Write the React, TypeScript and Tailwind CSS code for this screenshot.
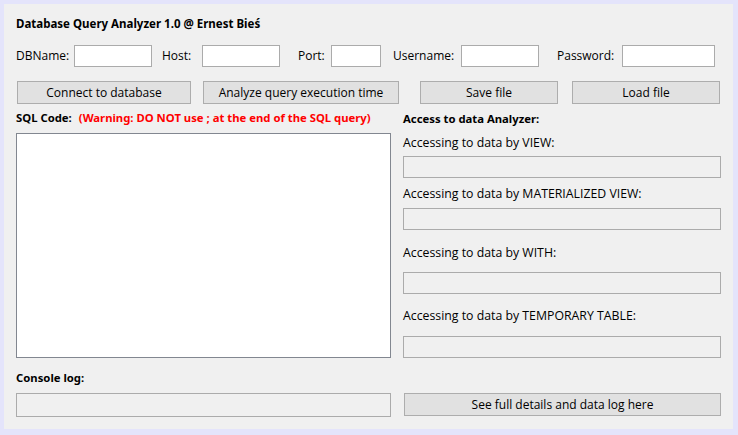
const ui = { fontFamily: '"Open Sans", "Noto Sans", sans-serif' };
const bold = { fontFamily: '"Noto Sans", "Open Sans", sans-serif' };

function Field({ label, labelW, inputW, ml }: { label: string; labelW: string; inputW: string; ml: string }) {
  return (
    <div className={`flex items-center ${ml}`}>
      <span className={`${labelW} text-[12px] leading-4 text-black`}>{label}</span>
      <input className={`${inputW} h-[22px] border border-[#ababab] bg-white outline-none`} />
    </div>
  );
}

function WinButton({ label, className }: { label: string; className: string }) {
  return (
    <button className={`h-[23px] border border-[#adadad] bg-[#e1e1e1] text-[12px] leading-4 text-black ${className}`}>
      {label}
    </button>
  );
}

function ResultRow({ label, mt, gap }: { label: string; mt: string; gap: string }) {
  return (
    <>
      <div className={`${mt} text-[12.3px] leading-4 text-black`}>{label}</div>
      <div className={`${gap} h-[22px] border border-[#ababab] bg-[#f0f0f0]`} />
    </>
  );
}

export default function App() {
  return (
    <div className="w-[738px] h-[435px] bg-[#e4e4fb] pl-[4px] pt-[4px] pr-[5px] pb-[6px]" style={ui}>
      <div className="flex h-full flex-col bg-[#f0f0f0] pl-[12px] pt-[13px]">
        <div className="text-[11.5px] font-bold leading-[14px] text-black" style={bold}>
          Database Query Analyzer 1.0 @ Ernest Bieś
        </div>

        <div className="mt-[14px] flex">
          <Field label="DBName:" labelW="w-[58px]" inputW="w-[78px]" ml="" />
          <Field label="Host:" labelW="w-[40px]" inputW="w-[78px]" ml="ml-[10px]" />
          <Field label="Port:" labelW="w-[33px]" inputW="w-[50px]" ml="ml-[18px]" />
          <Field label="Username:" labelW="w-[68px]" inputW="w-[78px]" ml="ml-[12px]" />
          <Field label="Password:" labelW="w-[65px]" inputW="w-[93px]" ml="ml-[18px]" />
        </div>

        <div className="mt-[14px] flex">
          <WinButton label="Connect to database" className="ml-px w-[174px]" />
          <WinButton label="Analyze query execution time" className="ml-[12px] w-[196px]" />
          <WinButton label="Save file" className="ml-[21px] w-[138px]" />
          <WinButton label="Load file" className="ml-[14px] w-[148px]" />
        </div>

        <div className="mt-[7px] flex">
          <div className="flex w-[375px] flex-col">
            <div className="flex h-[15px] items-center text-[11.3px] font-bold" style={bold}>
              <span className="text-black">SQL Code:</span>
              <span className="ml-[7px] text-[#ff0000]">(Warning: DO NOT use ; at the end of the SQL query)</span>
            </div>
            <textarea className="mt-[7px] h-[225px] resize-none border border-[#828790] bg-white outline-none" />
            <div className="mt-[13px] h-[14px] text-[11.3px] font-bold leading-[14px] text-black" style={bold}>
              Console log:
            </div>
            <div className="mt-[8px] h-[24px] border border-[#ababab] bg-[#f0f0f0]" />
          </div>

          <div className="ml-[12px] flex w-[318px] flex-col">
            <div className="h-[15px] text-[11.3px] font-bold leading-[15px] text-black" style={bold}>
              Access to data Analyzer:
            </div>
            <ResultRow label="Accessing to data by VIEW:" mt="mt-[9px]" gap="mt-[5px]" />
            <ResultRow label="Accessing to data by MATERIALIZED VIEW:" mt="mt-[8px]" gap="mt-[6px]" />
            <ResultRow label="Accessing to data by WITH:" mt="mt-[15px]" gap="mt-[11px]" />
            <ResultRow label="Accessing to data by TEMPORARY TABLE:" mt="mt-[14px]" gap="mt-[12px]" />
            <WinButton label="See full details and data log here" className="ml-px mt-[35px] w-[317px]" />
          </div>
        </div>
      </div>
    </div>
  );
}
